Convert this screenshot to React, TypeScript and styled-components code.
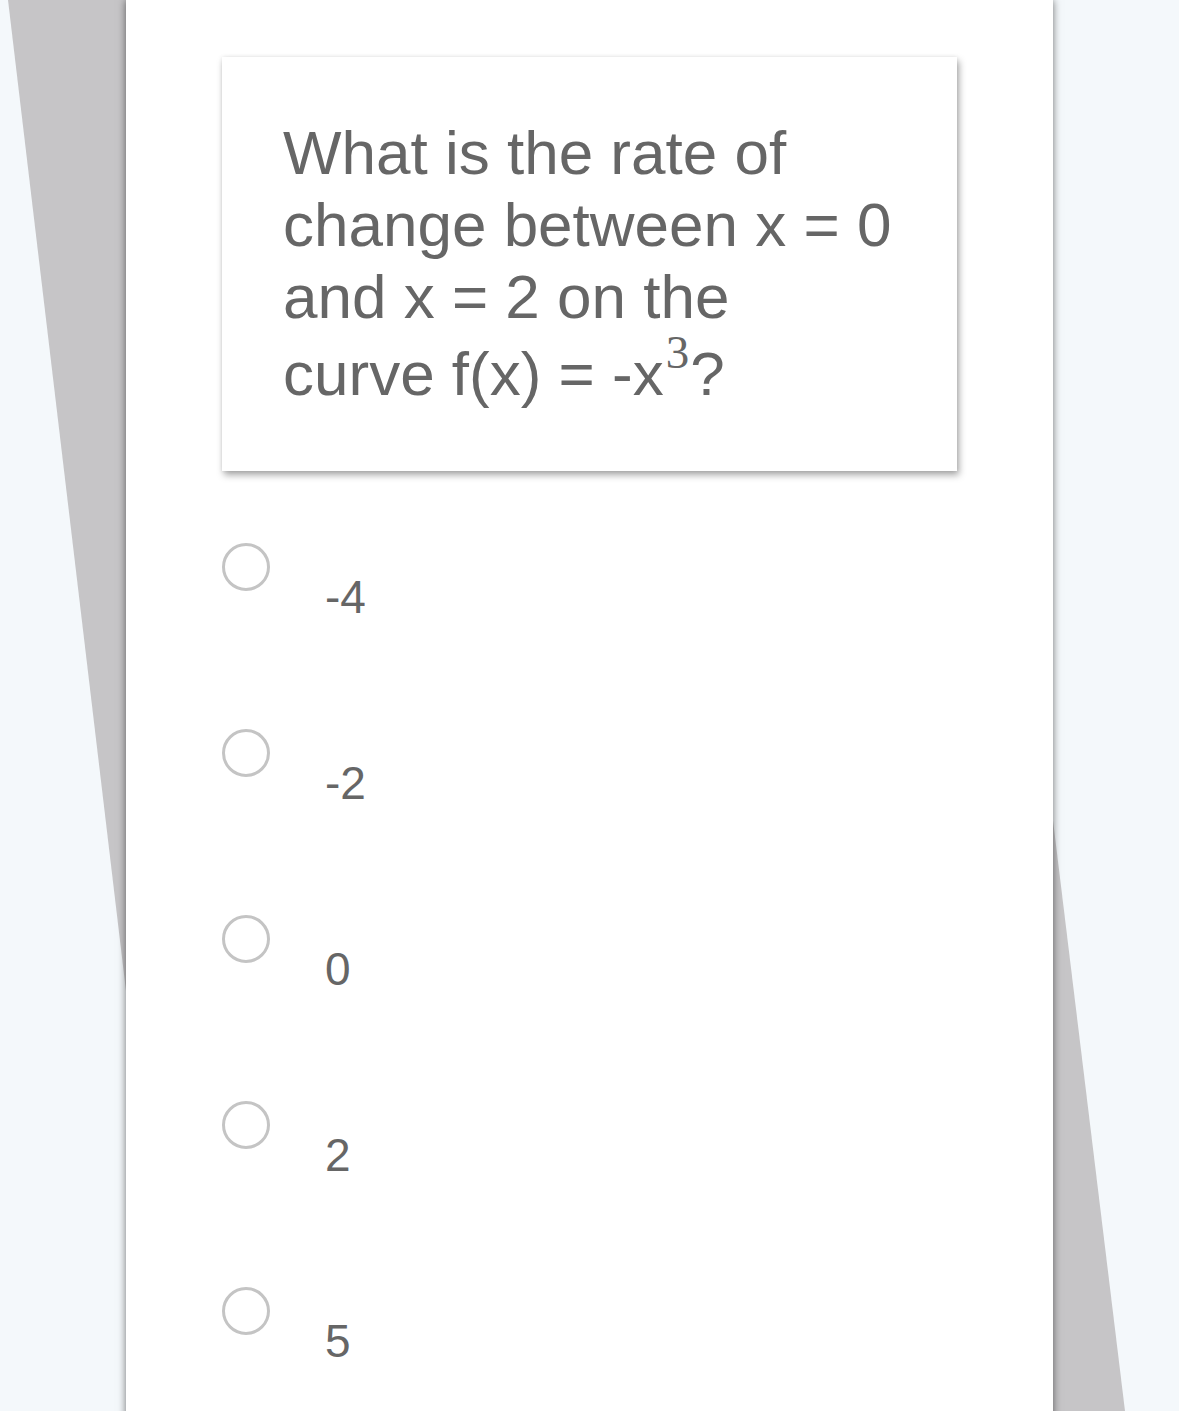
import React from 'react';
import styled, { createGlobalStyle } from 'styled-components';

const GlobalStyle = createGlobalStyle`
  html, body {
    margin: 0;
    padding: 0;
    background: #f4f8fb;
  }
  body {
    font-family: 'Liberation Sans', Arial, sans-serif;
  }
`;

// 페이지 전체
const Page = styled.div`
  position: relative;
  display: flex;
  justify-content: center;
  min-height: 1411px;
  overflow: hidden;
`;

// 카드 뒤쪽으로 비스듬히 놓인 회색 종이
const BackSheet = styled.div`
  position: absolute;
  inset: 0;
  background: #c6c5c7;
  clip-path: polygon(8px 0, 953px 0, 1125px 1411px, 176px 1411px);
  z-index: 0;
`;

const Sheet = styled.main`
  position: relative;
  z-index: 1;
  box-sizing: border-box;
  width: 927px;
  min-height: 1411px;
  padding: 57px 96px 0;
  background: #ffffff;
  box-shadow: 0 0 8px rgba(0, 0, 0, 0.55);
`;

// 문제 카드
const QuestionCard = styled.section`
  box-sizing: border-box;
  width: 735px;
  padding: 60px 40px 61px 61px;
  background: #ffffff;
  box-shadow: 2px 4px 7px rgba(0, 0, 0, 0.35), 0 0 4px rgba(0, 0, 0, 0.08);
`;

const QuestionText = styled.p`
  margin: 0;
  font-size: 62px;
  line-height: 72px;
  color: #666666;
  white-space: nowrap;
`;

const Power = styled.span`
  font-family: 'Liberation Serif', 'Times New Roman', serif;
  font-size: 47px;
  line-height: 0.85;
  vertical-align: 27px;
  margin: 0 1px 0 2px;
`;

// 보기 목록
const OptionList = styled.ul`
  list-style: none;
  margin: 72px 0 0;
  padding: 0;
`;

const OptionRow = styled.li`
  display: flex;
  align-items: flex-start;
  height: 186px;
`;

const Radio = styled.span`
  box-sizing: border-box;
  flex: none;
  width: 48px;
  height: 48px;
  border: 3px solid #c4c4c4;
  border-radius: 50%;
`;

const OptionLabel = styled.span`
  margin: 28px 0 0 55px;
  font-size: 46px;
  line-height: 53px;
  color: #666666;
`;

const options = ['-4', '-2', '0', '2', '5'];

const App: React.FC = () => {
  return (
    <>
      <GlobalStyle />
      <Page>
        <BackSheet />
        <Sheet>
          <QuestionCard>
            <QuestionText>
              What is the rate of
              <br />
              change between x = 0
              <br />
              and x = 2 on the
              <br />
              curve f(x) = -x<Power>3</Power>?
            </QuestionText>
          </QuestionCard>
          <OptionList>
            {options.map((option) => (
              <OptionRow key={option}>
                <Radio />
                <OptionLabel>{option}</OptionLabel>
              </OptionRow>
            ))}
          </OptionList>
        </Sheet>
      </Page>
    </>
  );
};

export default App;
